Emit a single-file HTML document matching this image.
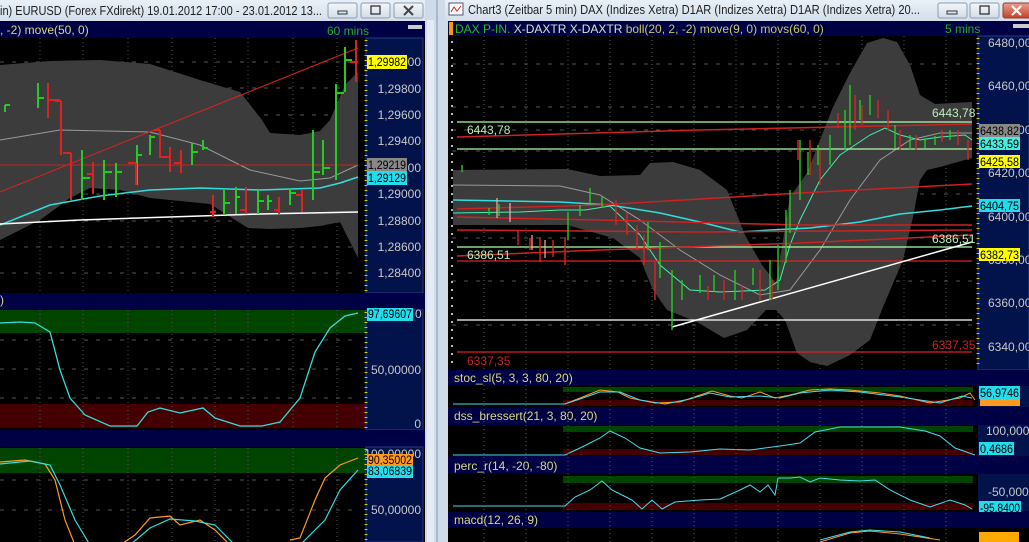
<!DOCTYPE html>
<html><head><meta charset="utf-8"><style>
html,body{margin:0;padding:0;width:1029px;height:542px;overflow:hidden;background:#c9d6e4;}
svg{display:block}
text{font-family:"Liberation Sans",sans-serif;}
</style></head><body>
<svg width="1029" height="542" viewBox="0 0 1029 542" xmlns="http://www.w3.org/2000/svg">
<defs>
<linearGradient id="tb" x1="0" y1="0" x2="0" y2="1"><stop offset="0" stop-color="#e9f0f7"/><stop offset="1" stop-color="#d3dfec"/></linearGradient>
<linearGradient id="btn" x1="0" y1="0" x2="0" y2="1"><stop offset="0" stop-color="#f4f7fb"/><stop offset="1" stop-color="#d2dce8"/></linearGradient>
<linearGradient id="cls" x1="0" y1="0" x2="0" y2="1"><stop offset="0" stop-color="#e9a090"/><stop offset="1" stop-color="#c4412a"/></linearGradient>
</defs>
<rect x="0" y="0" width="1029" height="542" fill="#c7d5e4"/>
<rect x="425" y="0" width="24" height="542" fill="#cfdbe8"/>
<rect x="436" y="0" width="2" height="542" fill="#a9b9cc"/>
<rect x="427" y="20" width="7" height="522" fill="#e4ebf3"/>
<!-- LEFT WINDOW -->
<rect x="0" y="0" width="425" height="21" fill="url(#tb)"/>
<text x="0" y="15" font-size="12.5" fill="#1e1e1e" textLength="322" lengthAdjust="spacingAndGlyphs">in)  EURUSD (Forex FXdirekt) 19.01.2012 17:00 - 23.01.2012 13...</text>
<rect x="328" y="3" width="29" height="15" rx="2" fill="url(#btn)" stroke="#8a9bb0"/>
<rect x="338" y="11" width="9" height="3" fill="none" stroke="#333" stroke-width="1"/>
<rect x="361" y="3" width="29" height="15" rx="2" fill="url(#btn)" stroke="#8a9bb0"/>
<rect x="371" y="6" width="9" height="8" fill="none" stroke="#333" stroke-width="1.3"/>
<rect x="394" y="3" width="29" height="15" rx="2" fill="url(#btn)" stroke="#8a9bb0"/>
<path d="M404 6 L413 15 M413 6 L404 15" stroke="#444" stroke-width="2"/>
<rect x="0" y="21" width="425" height="521" fill="#000"/>
<rect x="0" y="22" width="425" height="16" fill="#000044"/>
<text x="0" y="34" font-size="12" fill="#d8d880">, -2) move(50, 0)</text>
<text x="327" y="35" font-size="12" fill="#22aa22">60 mins</text>
<rect x="408" y="25" width="14" height="4" fill="#cccccc"/>
<rect x="366" y="38" width="57" height="255" fill="#02124a" stroke="#2a3a8a"/>
<g font-size="12" fill="#c8c8c8" text-anchor="end">
<text x="421" y="93">1,29800</text><text x="421" y="119">1,29600</text><text x="421" y="145">1,29400</text>
<text x="421" y="172">1,29200</text><text x="421" y="198">1,29000</text><text x="421" y="225">1,28800</text>
<text x="421" y="251">1,28600</text><text x="421" y="277">1,28400</text><text x="421" y="66">1,30000</text>
</g>
<path d="M366 40 V293" stroke="#cccc00" stroke-dasharray="1 4" stroke-width="3"/>
<rect x="367" y="55" width="40" height="14" fill="#ffff00"/><text x="368" y="66" font-size="12" fill="#000" textLength="38" lengthAdjust="spacingAndGlyphs">1,29982</text>
<rect x="367" y="158" width="40" height="14" fill="#888"/><text x="368" y="169" font-size="12" fill="#000" textLength="38" lengthAdjust="spacingAndGlyphs">1,29219</text>
<rect x="367" y="171" width="40" height="14" fill="#22ddee"/><text x="368" y="182" font-size="12" fill="#000" textLength="38" lengthAdjust="spacingAndGlyphs">1,29129</text>
<g stroke="#555" stroke-dasharray="1 3">
<path d="M40 38V293M83 38V293M128 38V293M172 38V293M215 38V293M248 38V293M293 38V293M337 38V293"/>
<path d="M0 62H358M0 88H358M0 115H358M0 141H358M0 167H358M0 194H358M0 221H358M0 247H358M0 273H358" stroke-dasharray="4 8"/>
</g>
<path d="M0 65 L50 61 L100 60 L150 64 L200 80 L240 92 L262 120 L270 133 L300 135 L320 131 L330 120 L345 85 L358 72 L358 258 L340 222 L320 226 L300 228 L270 229 L248 228 L210 204 L150 198 L120 190 L90 188 L70 198 L40 220 L0 240 Z" fill="#3c3c3c"/>
<path d="M0 140 L60 130 L150 132 L200 145 L250 170 L300 181 L330 178 L358 165" stroke="#999" fill="none"/>
<path d="M0 225 L50 205 L100 196 L150 190 L200 188 L260 190 L320 188 L340 183 L358 177" stroke="#33dddd" fill="none" stroke-width="1.5"/>
<path d="M0 224 L80 220 L200 216 L260 214 L358 212" stroke="#fff" fill="none" stroke-width="1.5"/>
<path d="M0 192 L358 48" stroke="#dd2222" fill="none"/>
<path d="M0 165 H358" stroke="#cc2222"/>
<g stroke="#22cc22" stroke-width="2" fill="none">
<path d="M5 105V112M5 105H10M38 83V108M38 98H44M82 150V200M82 178H90M104 160V200M104 172H112M116 163V197M116 172H122M137 145V185M137 155H142M150 135V155M150 137H155M192 143V165M192 152H198M203 140V150M203 148H208M224 190V215M224 203H230M236 187V214M236 197H240M258 190V214M258 201H264M268 195V210M268 201H272M290 188V205M290 193H296M313 130V200M313 172H320M323 140V175M323 168H330M336 84V180M336 93H344M345 47V92M345 60H352"/>
</g>
<g stroke="#dd2222" stroke-width="2" fill="none">
<path d="M48 83V118M48 100H60M61 101V155M55 101H61M71 153V200M63 153H71M93 162V194M87 174H93M136 163V185M128 163H136M160 130V158M154 130H160M170 147V172M160 157H170M181 150V173M174 163H181M213 195V217M210 212H216M246 187V214M240 210H246M279 197V214M274 210H279M302 190V212M296 195H302M356 40V82M350 62H358"/>
</g>
<rect x="0" y="293" width="425" height="17" fill="#000044"/>
<text x="0" y="304" font-size="12" fill="#d8d880">)</text>
<rect x="0" y="310" width="366" height="23" fill="#004400"/>
<rect x="0" y="404" width="366" height="24" fill="#440000"/>
<g stroke="#555" stroke-dasharray="1 3"><path d="M40 310V428M83 310V428M128 310V428M172 310V428M215 310V428M248 310V428M293 310V428M337 310V428"/><path d="M0 340H358M0 369H358M0 398H358" stroke-dasharray="4 8"/></g>
<path d="M0 323 L20 322 L35 323 L50 332 L60 370 L70 398 L85 415 L110 426 L137 426 L148 412 L160 408 L180 413 L203 408 L215 418 L240 426 L262 426 L280 422 L300 398 L315 352 L330 328 L345 316 L358 313" stroke="#33dddd" fill="none" stroke-width="1.3"/>
<rect x="366" y="310" width="57" height="120" fill="#02124a" stroke="#2a3a8a"/>
<path d="M366 312 V428" stroke="#cccc00" stroke-dasharray="1 4" stroke-width="3"/>
<text x="421" y="374" font-size="12" fill="#c8c8c8" text-anchor="end">50,00000</text>
<text x="421" y="428" font-size="12" fill="#c8c8c8" text-anchor="end">0</text>
<rect x="367" y="308" width="46" height="13" fill="#22ddee"/><text x="368" y="318" font-size="12" fill="#000" textLength="44" lengthAdjust="spacingAndGlyphs">97,69607</text>
<text x="415" y="318" font-size="12" fill="#c8c8c8">0</text>
<rect x="0" y="430" width="425" height="17" fill="#000044"/>
<rect x="0" y="448" width="366" height="25" fill="#004400"/>
<g stroke="#555" stroke-dasharray="1 3"><path d="M40 448V542M83 448V542M128 448V542M172 448V542M215 448V542M248 448V542M293 448V542M337 448V542"/><path d="M0 480H358M0 510H358" stroke-dasharray="4 8"/></g>
<path d="M0 462 L25 460 L45 464 L55 480 L65 520 L75 545 M120 545 L135 535 L150 518 L170 516 L180 525 L200 520 L215 530 L230 545 M290 540 L300 538 L315 500 L325 478 L340 465 L358 458" stroke="#ff9922" fill="none" stroke-width="1.2"/>
<path d="M0 464 L30 461 L50 465 L60 485 L75 520 L90 545 M130 545 L150 528 L170 519 L195 521 L215 525 L235 545 M300 545 L325 520 L340 490 L358 470" stroke="#33dddd" fill="none" stroke-width="1.2"/>
<rect x="366" y="447" width="57" height="95" fill="#02124a" stroke="#2a3a8a"/>
<path d="M366 449 V542" stroke="#cccc00" stroke-dasharray="1 4" stroke-width="3"/>
<text x="421" y="458" font-size="12" fill="#c8c8c8" text-anchor="end">100,00000</text>
<text x="421" y="514" font-size="12" fill="#c8c8c8" text-anchor="end">50,00000</text>
<rect x="367" y="454" width="46" height="12" fill="#ff9922"/><text x="368" y="464" font-size="12" fill="#000" textLength="44" lengthAdjust="spacingAndGlyphs">90,35002</text>
<rect x="367" y="465" width="46" height="13" fill="#22ddee"/><text x="368" y="475" font-size="12" fill="#000" textLength="44" lengthAdjust="spacingAndGlyphs">83,06839</text>

<!-- RIGHT WINDOW -->
<rect x="445" y="0" width="584" height="21" fill="url(#tb)"/>
<rect x="449" y="3" width="14" height="12" fill="#ffffff" stroke="#557" />
<path d="M451 12 L454 7 L457 11 L461 6" stroke="#c22" fill="none"/>
<text x="468" y="14" font-size="12.5" fill="#1e1e1e" textLength="452" lengthAdjust="spacingAndGlyphs">Chart3 (Zeitbar 5 min)  DAX (Indizes Xetra) D1AR (Indizes Xetra) D1AR (Indizes Xetra) 20...</text>
<rect x="938" y="3" width="29" height="15" rx="2" fill="url(#btn)" stroke="#8a9bb0"/>
<rect x="947" y="11" width="10" height="3" fill="none" stroke="#333"/>
<rect x="970" y="3" width="29" height="15" rx="2" fill="url(#btn)" stroke="#8a9bb0"/>
<rect x="980" y="6" width="9" height="8" fill="none" stroke="#333" stroke-width="1.3"/>
<rect x="1003" y="3" width="30" height="15" rx="2" fill="url(#cls)" stroke="#8a4030"/>
<path d="M1012 6 L1021 15 M1021 6 L1012 15" stroke="#fff" stroke-width="2.2"/>
<rect x="448" y="21" width="581" height="521" fill="#000"/>
<rect x="448" y="21" width="581" height="15" fill="#000044"/>
<rect x="449" y="22" width="4" height="13" fill="#ff9900"/>
<text x="455" y="33" font-size="12"><tspan fill="#22bb22">DAX P-IN. </tspan><tspan fill="#c8e8c8">X-DAXTR X-DAXTR </tspan><tspan fill="#c8c860">boll(20, 2, -2) move(9, 0) movs(60, 0)</tspan></text>
<text x="945" y="33" font-size="12" fill="#22aa22">5 mins</text>
<rect x="1013" y="24" width="16" height="4" fill="#ccc"/>
<rect x="978" y="36" width="51" height="334" fill="#02124a" stroke="#2a3a8a"/>
<path d="M978 38 V368" stroke="#cccc00" stroke-dasharray="1 4" stroke-width="3"/>
<g font-size="12" fill="#c8c8c8">
<text x="988" y="47">6480,00</text><text x="988" y="90">6460,00</text><text x="988" y="177">6420,00</text>
<text x="988" y="221">6400,00</text><text x="988" y="264">6380,00</text><text x="988" y="307">6360,00</text><text x="988" y="351">6340,00</text><text x="988" y="134">6440,00</text>
</g>
<rect x="979" y="124" width="41" height="13" fill="#888"/><text x="980" y="135" font-size="12" fill="#000" textLength="39" lengthAdjust="spacingAndGlyphs">6438,82</text>
<rect x="979" y="137" width="41" height="13" fill="#44eedd"/><text x="980" y="148" font-size="12" fill="#000" textLength="39" lengthAdjust="spacingAndGlyphs">6433,59</text>
<rect x="979" y="155" width="41" height="13" fill="#ffff00"/><text x="980" y="166" font-size="12" fill="#000" textLength="39" lengthAdjust="spacingAndGlyphs">6425,58</text>
<rect x="979" y="199" width="41" height="13" fill="#22ddee"/><text x="980" y="210" font-size="12" fill="#000" textLength="39" lengthAdjust="spacingAndGlyphs">6404,75</text>
<rect x="979" y="248" width="41" height="13" fill="#ffff00"/><text x="980" y="259" font-size="12" fill="#000" textLength="39" lengthAdjust="spacingAndGlyphs">6382,73</text>
<g stroke="#555" stroke-dasharray="1 3">
<path d="M484 36V370M526 36V370M568 36V370M610 36V370M652 36V370M694 36V370M736 36V370M778 36V370M820 36V370M862 36V370M904 36V370M946 36V370"/>
<path d="M452 64H976M452 107H976M452 130H976M452 151H976M452 194H976M452 238H976M452 281H976M452 325H976" stroke-dasharray="4 8"/>
</g>
<path d="M452 41V368" stroke="#bbb" stroke-dasharray="2 6" stroke-width="2"/>
<path d="M453 170 L567 169 L600 176 L640 175 L650 163 L673 162 L700 170 L727 190 L745 235 L762 265 L776 283 L790 197 L807 173 L833 107 L850 73 L867 43 L883 38 L897 42 L910 65 L920 95 L935 104 L972 102 L972 158 L940 167 L927 170 L920 180 L913 217 L903 260 L883 307 L870 340 L850 355 L827 366 L810 362 L797 353 L785 320 L776 310 L766 310 L747 330 L724 338 L697 322 L667 310 L653 290 L640 258 L613 238 L567 225 L453 225 Z" fill="#3c3c3c"/>
<path d="M453 185 L560 186 L600 195 L640 220 L680 250 L720 275 L760 295 L790 290 L820 250 L850 200 L880 160 L910 140 L940 133 L972 133" stroke="#999" fill="none"/>
<path d="M453 200 L560 202 L610 205 L660 213 L700 222 L740 232 L770 230 L810 228 L860 222 L900 214 L940 210 L972 206" stroke="#33dddd" fill="none" stroke-width="1.5"/>
<path d="M453 213 L520 212 L560 210 L585 210 L610 206 L640 235 L660 265 L690 290 L720 292 L765 290 L780 280 L790 245 L800 220 L820 180 L840 155 L870 135 L885 128 L900 135 L920 140 L940 137 L965 135 L972 140" stroke="#44eeaa" fill="none" stroke-width="1"/>
<path d="M457 122H972M457 149H972M457 247H972" stroke="#aaffaa" stroke-width="1.2"/>
<path d="M457 320H972" stroke="#fff" stroke-width="1.3"/>
<path d="M457 261H972M457 352H972" stroke="#dd2222" stroke-width="1.3"/>
<path d="M457 137 L700 130 L972 124" stroke="#cc2222" stroke-width="1.5" fill="none"/>
<path d="M457 209 L600 205 L800 193 L972 184" stroke="#cc2222" stroke-width="1.5" fill="none"/>
<path d="M457 217 L600 220 L800 225 L972 225" stroke="#cc2222" stroke-width="1.5" fill="none"/>
<path d="M457 230 L700 232 L972 230" stroke="#cc2222" stroke-width="1.5" fill="none"/>
<path d="M457 256 L600 250 L800 243 L972 235" stroke="#cc2222" stroke-width="1.5" fill="none"/>
<path d="M672 327 L972 242" stroke="#fff" stroke-width="1.5"/>
<g font-size="12">
<text x="467" y="134" fill="#bbeebb">6443,78</text><text x="932" y="117" fill="#bbeebb">6443,78</text>
<text x="467" y="259" fill="#bbeebb">6386,51</text><text x="932" y="243" fill="#bbeebb">6386,51</text>
<text x="467" y="365" fill="#cc2222">6337,35</text><text x="932" y="349" fill="#cc2222">6337,35</text>
</g>
<g stroke="#22cc22" stroke-width="1.4" fill="none">
<path d="M462 165V172M489 208V215M499 204V216M568 212V240M580 205V216M590 188V205M602 197V208M648 222V250M660 242V278M672 270V330M682 280V300M700 275V293M714 275V292M735 270V300M753 268V285M770 260V300M778 245V290M786 210V263M790 190V233M800 140V200M808 152V175M818 145V165M830 135V165M845 110V150M850 85V145M860 100V120M870 95V115M895 125V148M910 135V150M925 138V148M935 136V145M950 130V140"/>
</g>
<g stroke="#dd2222" stroke-width="1.4" fill="none">
<path d="M518 230V245M530 238V250M540 237V262M553 240V257M565 237V265M616 200V225M627 213V235M637 225V250M644 235V265M655 262V300M708 286V300M724 280V300M742 285V300M760 270V300M772 280V300M798 140V160M810 140V175M820 150V185M838 113V128M855 95V130M862 105V125M878 100V118M888 110V130M900 130V150M916 135V150M942 130V142M958 130V145M968 140V160"/>
</g>
<g stroke="#ffaaaa" stroke-width="1.2"><path d="M497 198V218M510 203V222M532 235V250M545 240V258"/></g>
<rect x="448" y="370" width="581" height="15" fill="#000044"/>
<text x="454" y="382" font-size="12" fill="#d8d880">stoc_sl(5, 3, 3, 80, 20)</text>
<rect x="563" y="387" width="410" height="5" fill="#004400"/>
<rect x="563" y="400" width="410" height="6" fill="#440000"/>
<path d="M453 404 L565 404 L580 398 L600 390 L618 392 L630 398 L655 403 L680 402 L700 395 L712 391 L730 396 L742 398 L760 392 L775 398 L790 395 L810 390 L830 389 L850 390 L880 393 L900 396 L930 403 L960 398 L970 393 L975 400" stroke="#ff9922" fill="none"/>
<path d="M453 404 L565 404 L580 399 L600 392 L620 392 L640 400 L665 404 L690 399 L710 393 L730 397 L760 396 L780 398 L800 393 L830 390 L860 392 L900 397 L940 403 L962 396 L972 398" stroke="#44ddee" fill="none"/>
<rect x="978" y="386" width="51" height="21" fill="#02124a"/>
<rect x="980" y="398" width="40" height="8" fill="#ff9922"/>
<rect x="979" y="386" width="41" height="13" fill="#22ddee"/><text x="980" y="397" font-size="12" fill="#000" textLength="39" lengthAdjust="spacingAndGlyphs">56,9746</text>
<rect x="448" y="407" width="581" height="18" fill="#000044"/>
<text x="454" y="420" font-size="12" fill="#d8d880">dss_bressert(21, 3, 80, 20)</text>
<rect x="563" y="426" width="410" height="6" fill="#004400"/>
<rect x="563" y="449" width="410" height="6" fill="#440000"/>
<path d="M453 455 L565 455 L580 448 L600 438 L610 431 L625 438 L640 448 L660 453 L690 452 L720 449 L750 450 L780 446 L800 443 L815 432 L840 427 L870 427 L900 427 L925 431 L940 436 L955 448 L975 455" stroke="#44ddee" fill="none"/>
<rect x="978" y="425" width="51" height="31" fill="#02124a"/>
<text x="986" y="435" font-size="12" fill="#c8c8c8">100,0000</text>
<rect x="979" y="442" width="35" height="13" fill="#22ddee"/><text x="980" y="453" font-size="12" fill="#000" textLength="33" lengthAdjust="spacingAndGlyphs">0,4686</text>
<rect x="448" y="456" width="581" height="18" fill="#000044"/>
<text x="454" y="470" font-size="12" fill="#d8d880">perc_r(14, -20, -80)</text>
<rect x="563" y="476" width="410" height="7" fill="#004400"/>
<rect x="563" y="503" width="410" height="7" fill="#440000"/>
<path d="M453 506 L565 506 L575 497 L590 490 L602 481 L612 490 L622 495 L632 500 L642 509 L652 500 L662 509 L675 502 L700 500 L720 499 L740 490 L750 485 L760 492 L768 485 L775 495 L778 478 L790 478 L800 477 L810 482 L820 478 L840 480 L860 481 L875 480 L890 490 L910 500 L930 507 L950 500 L965 505 L972 509" stroke="#44ddee" fill="none"/>
<rect x="978" y="474" width="51" height="37" fill="#02124a"/>
<text x="988" y="496" font-size="12" fill="#c8c8c8">-50,0000</text>
<rect x="979" y="501" width="42" height="13" fill="#22ddee"/><text x="980" y="512" font-size="12" fill="#000" textLength="40" lengthAdjust="spacingAndGlyphs">-95,8400</text>
<rect x="448" y="512" width="581" height="16" fill="#000044"/>
<text x="454" y="524" font-size="12" fill="#d8d880">macd(12, 26, 9)</text>
<path d="M820 542 L850 533 L870 531 L900 534 L940 540" stroke="#ff9922" fill="none"/>
<path d="M820 540 L850 532 L870 530 L900 532 L930 538" stroke="#44ddee" fill="none"/>
<rect x="979" y="532" width="40" height="10" fill="#ffaa00"/>
<g stroke="#555" stroke-dasharray="1 3"><path d="M484 385V542M526 385V542M568 385V542M610 385V542M652 385V542M694 385V542M736 385V542M778 385V542M820 385V542M862 385V542M904 385V542M946 385V542"/></g>
</svg>
</body></html>
